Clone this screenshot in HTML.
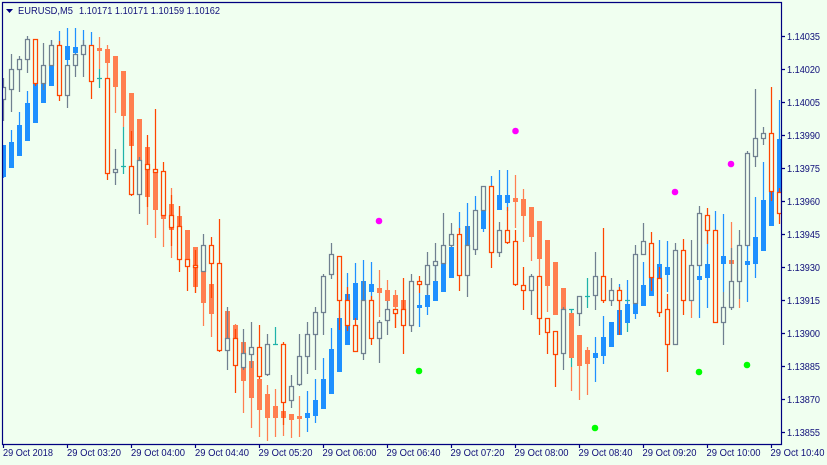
<!DOCTYPE html>
<html><head><meta charset="utf-8"><style>
html,body{margin:0;padding:0;background:#f0fff0}
svg{display:block}
text{font-family:"Liberation Sans",sans-serif;font-size:10px;fill:#10107a}
</style></head><body>
<svg width="827" height="465" viewBox="0 0 827 465" xmlns="http://www.w3.org/2000/svg">
<rect width="827" height="465" fill="#f0fff0"/>
<defs><clipPath id="c"><rect x="3" y="3" width="778" height="441"/></clipPath></defs>
<g clip-path="url(#c)" fill="none" stroke-width="1.25">
<path stroke="#1e90ff" d="M3.5 145V178M11.5 130V168M19.5 112V156M27.5 91V141M35.5 83V123M51.5 40V65M59.5 31V45M67.5 28V65M75.5 28V54M83.5 30V45M91.5 32V45M307.5 391V432M315.5 379V423M323.5 358V409M331.5 328V394M339.5 310V372M347.5 273V345M355.5 263V320M363.5 260V300M371.5 262V300M419.5 293V327M427.5 284V315M435.5 266V301M459.5 212V233M467.5 203V226M475.5 196V210M483.5 210V232M491.5 176V186M499.5 170V210M507.5 170V211M595.5 337V382M603.5 316V364M619.5 284V335M627.5 280V323M635.5 303V319M643.5 262V306M659.5 240V279M667.5 241V292M699.5 265V318M707.5 230V308M715.5 211V230M723.5 214V292M747.5 245V302M755.5 197V278M763.5 162V251M779.5 100V192"/>
<path stroke="#1e90ff" stroke-width="5" shape-rendering="crispEdges" d="M3.5 145V177M11.5 142V168M19.5 125V156M27.5 103V141M35.5 83V123M43.5 83V103M51.5 65V86M67.5 46V60M75.5 47V53M307.5 413V418M315.5 400V416M323.5 379V409M331.5 349V394M339.5 318V372M347.5 294V345M355.5 283V320M363.5 281V300M371.5 284V292M419.5 305V308M427.5 295V307M435.5 281V301M443.5 263V292M451.5 247V278M467.5 226V245M483.5 210V229M499.5 195V210M507.5 195V203M595.5 353V358M603.5 337V356M611.5 322V347M619.5 310V335M627.5 304V323M635.5 303V314M643.5 285V306M651.5 277V296M659.5 264V279M667.5 267V275M699.5 276V280M707.5 264V278M723.5 256V264M747.5 261V265M755.5 237V264M763.5 200V251M771.5 191V226M779.5 139V192"/>
<path stroke="#ff7f50" d="M99.5 37V69M107.5 45V78M115.5 56V113M123.5 71V127M147.5 147V225M155.5 169V238M163.5 215V247M171.5 188V258M179.5 206V226M195.5 247V293M203.5 271V326M211.5 284V337M227.5 311V350M235.5 324V338M243.5 342V413M251.5 361V428M259.5 379V437M267.5 385V441M275.5 389V437M283.5 411V436M291.5 414V438M299.5 396V437M379.5 270V317M387.5 280V301M395.5 290V328M515.5 175V228M523.5 189V242M531.5 207V261M539.5 221V277M547.5 240V312M571.5 367V391M579.5 335V400M587.5 347V395M691.5 300V318M731.5 222V292M739.5 299V308"/>
<path stroke="#ff7f50" stroke-width="5" shape-rendering="crispEdges" d="M99.5 48V51M107.5 49V63M115.5 56V87M123.5 71V116M131.5 93V146M139.5 119V160M147.5 147V197M155.5 169V210M163.5 215V219M171.5 204V230M179.5 216V226M187.5 230V266M195.5 247V287M203.5 271V303M211.5 284V314M227.5 311V338M235.5 325V338M243.5 342V381M251.5 361V398M259.5 379V410M267.5 394V418M275.5 406V418M283.5 411V418M291.5 414V420M299.5 416V419M379.5 288V293M387.5 290V301M395.5 295V307M403.5 300V310M515.5 198V202M523.5 199V216M531.5 207V237M539.5 221V259M547.5 240V286M555.5 262V315M563.5 288V309M571.5 313V358M579.5 335V366M587.5 350V364M731.5 260V264"/>
<path stroke="#20b2aa" d="M99.5 69V88M97 78.5h5M123.5 127V174M121 166.5h5M275.5 327V344M273 344.5h5M571.5 309V313M571.5 358V367M569 309.5h5M587.5 278V308M585 296.5h5M627.5 323V332M625 300.5h5"/>
<path stroke="#708090" d="M3.5 78V121M11.5 54V112M19.5 56V92M27.5 36V73M43.5 43V90M51.5 40V65M67.5 65V108M75.5 54V77M83.5 40V77M115.5 149V185M139.5 157V214M203.5 234V271M227.5 307V370M243.5 329V370M251.5 322V368M267.5 334V376M291.5 375V408M299.5 334V386M307.5 322V374M315.5 307V370M323.5 274V335M331.5 243V279M363.5 281V360M379.5 320V363M387.5 301V335M411.5 274V332M427.5 252V295M435.5 243V281M443.5 213V263M451.5 223V247M467.5 226V297M475.5 210V255M483.5 186V210M499.5 222V257M531.5 274V315M563.5 307V370M579.5 296V326M595.5 252V310M611.5 278V306M635.5 245V303M643.5 223V254M675.5 243V344M691.5 240V300M699.5 206V265M723.5 292V345M731.5 248V310M739.5 230V299M747.5 151V245M755.5 89V167M763.5 127V145"/>
<path stroke="#ff4500" d="M35.5 39V86M59.5 41V101M91.5 45V99M107.5 78V180M131.5 131V196M147.5 135V207M155.5 109V173M163.5 162V215M171.5 195V246M179.5 206V272M187.5 259V291M195.5 250V293M211.5 237V298M219.5 219V352M235.5 329V393M259.5 325V379M283.5 342V425M339.5 256V330M347.5 287V331M355.5 318V351M371.5 296V345M395.5 309V328M403.5 278V354M419.5 276V293M459.5 228V291M491.5 186V268M507.5 207V244M515.5 230V286M523.5 267V310M539.5 276V335M547.5 318V354M555.5 331V387M603.5 228V303M619.5 287V335M651.5 232V291M659.5 267V317M667.5 294V372M683.5 239V315M707.5 208V244M715.5 230V322M771.5 87V201M779.5 188V224"/>
<path stroke="#708090" fill="#f0fff0" d="M1.5 87.5h4V99.5h-4zM9.5 69.5h4V89.5h-4zM17.5 59.5h4V69.5h-4zM25.5 39.5h4V59.5h-4zM41.5 65.5h4V83.5h-4zM49.5 45.5h4V65.5h-4zM65.5 65.5h4V95.5h-4zM73.5 54.5h4V65.5h-4zM81.5 45.5h4V54.5h-4zM113.5 169.5h4V172.5h-4zM137.5 160.5h4V194.5h-4zM201.5 245.5h4V271.5h-4zM225.5 338.5h4V350.5h-4zM241.5 353.5h4V367.5h-4zM249.5 347.5h4V354.5h-4zM265.5 344.5h4V374.5h-4zM289.5 386.5h4V400.5h-4zM297.5 356.5h4V384.5h-4zM305.5 334.5h4V356.5h-4zM313.5 312.5h4V334.5h-4zM321.5 276.5h4V312.5h-4zM329.5 254.5h4V274.5h-4zM361.5 300.5h4V353.5h-4zM377.5 322.5h4V338.5h-4zM385.5 309.5h4V320.5h-4zM409.5 281.5h4V325.5h-4zM425.5 265.5h4V284.5h-4zM433.5 261.5h4V265.5h-4zM441.5 245.5h4V263.5h-4zM449.5 234.5h4V245.5h-4zM465.5 245.5h4V275.5h-4zM473.5 210.5h4V249.5h-4zM481.5 186.5h4V210.5h-4zM497.5 230.5h4V252.5h-4zM529.5 276.5h4V290.5h-4zM561.5 309.5h4V353.5h-4zM577.5 296.5h4V313.5h-4zM593.5 276.5h4V295.5h-4zM609.5 290.5h4V300.5h-4zM633.5 254.5h4V303.5h-4zM641.5 241.5h4V254.5h-4zM673.5 250.5h4V344.5h-4zM689.5 265.5h4V300.5h-4zM697.5 213.5h4V265.5h-4zM721.5 307.5h4V322.5h-4zM729.5 281.5h4V307.5h-4zM737.5 245.5h4V281.5h-4zM745.5 153.5h4V245.5h-4zM753.5 138.5h4V156.5h-4zM761.5 133.5h4V138.5h-4z"/>
<path stroke="#ff4500" fill="#f0fff0" d="M33.5 39.5h4V83.5h-4zM57.5 45.5h4V95.5h-4zM89.5 45.5h4V81.5h-4zM105.5 78.5h4V173.5h-4zM129.5 166.5h4V194.5h-4zM145.5 164.5h4V169.5h-4zM153.5 169.5h4V172.5h-4zM161.5 171.5h4V215.5h-4zM169.5 215.5h4V227.5h-4zM177.5 226.5h4V259.5h-4zM185.5 259.5h4V266.5h-4zM193.5 265.5h4V267.5h-4zM209.5 245.5h4V263.5h-4zM217.5 263.5h4V350.5h-4zM233.5 338.5h4V365.5h-4zM257.5 347.5h4V376.5h-4zM281.5 344.5h4V402.5h-4zM337.5 256.5h4V300.5h-4zM345.5 300.5h4V325.5h-4zM353.5 325.5h4V351.5h-4zM369.5 300.5h4V338.5h-4zM393.5 309.5h4V313.5h-4zM401.5 309.5h4V325.5h-4zM417.5 281.5h4V284.5h-4zM457.5 234.5h4V275.5h-4zM489.5 186.5h4V252.5h-4zM505.5 230.5h4V242.5h-4zM513.5 241.5h4V284.5h-4zM521.5 285.5h4V290.5h-4zM537.5 276.5h4V318.5h-4zM545.5 318.5h4V332.5h-4zM553.5 331.5h4V354.5h-4zM601.5 276.5h4V300.5h-4zM617.5 290.5h4V300.5h-4zM649.5 243.5h4V277.5h-4zM657.5 278.5h4V312.5h-4zM665.5 309.5h4V344.5h-4zM681.5 250.5h4V300.5h-4zM705.5 215.5h4V230.5h-4zM713.5 230.5h4V322.5h-4zM769.5 133.5h4V191.5h-4zM777.5 192.5h4V213.5h-4z"/>
</g>
<g fill="#ff00ff"><circle cx="379" cy="221" r="3.3"/><circle cx="515.500" cy="131" r="3.300"/><circle cx="675" cy="192" r="3.300"/><circle cx="731" cy="164" r="3.300"/></g>
<g fill="#00ff00"><circle cx="419" cy="371" r="3.300"/><circle cx="595" cy="428" r="3.300"/><circle cx="699" cy="372" r="3.300"/><circle cx="747" cy="365" r="3.300"/></g>
<g fill="none" stroke="#000080" stroke-width="1.2">
<path d="M2.5 2.5H781.500V444.500H2.500z"/>
<path d="M782 36.500h3M782 69.500h3M782 102.500h3M782 135.500h3M782 168.500h3M782 201.500h3M782 234.500h3M782 267.500h3M782 300.500h3M782 333.500h3M782 366.500h3M782 399.500h3M782 432.500h3"/>
<path d="M3.500 445v3M67.500 445v3M131.500 445v3M195.500 445v3M259.500 445v3M323.500 445v3M387.500 445v3M451.500 445v3M515.500 445v3M579.500 445v3M643.500 445v3M707.500 445v3M771.500 445v3"/>
</g>
<path d="M6 9h7l-3.500 4z" fill="#000080"/>
<text x="18" y="14" textLength="55" lengthAdjust="spacingAndGlyphs">EURUSD,M5</text>
<text x="79" y="14" textLength="141" lengthAdjust="spacingAndGlyphs">1.10171 1.10171 1.10159 1.10162</text>
<g>
<text x="787" y="40" textLength="33" lengthAdjust="spacingAndGlyphs">1.14035</text>
<text x="787" y="73" textLength="33" lengthAdjust="spacingAndGlyphs">1.14020</text>
<text x="787" y="106" textLength="33" lengthAdjust="spacingAndGlyphs">1.14005</text>
<text x="787" y="139" textLength="33" lengthAdjust="spacingAndGlyphs">1.13990</text>
<text x="787" y="172" textLength="33" lengthAdjust="spacingAndGlyphs">1.13975</text>
<text x="787" y="205" textLength="33" lengthAdjust="spacingAndGlyphs">1.13960</text>
<text x="787" y="238" textLength="33" lengthAdjust="spacingAndGlyphs">1.13945</text>
<text x="787" y="271" textLength="33" lengthAdjust="spacingAndGlyphs">1.13930</text>
<text x="787" y="304" textLength="33" lengthAdjust="spacingAndGlyphs">1.13915</text>
<text x="787" y="337" textLength="33" lengthAdjust="spacingAndGlyphs">1.13900</text>
<text x="787" y="370" textLength="33" lengthAdjust="spacingAndGlyphs">1.13885</text>
<text x="787" y="403" textLength="33" lengthAdjust="spacingAndGlyphs">1.13870</text>
<text x="787" y="436" textLength="33" lengthAdjust="spacingAndGlyphs">1.13855</text>
</g>
<g>
<text x="3" y="456" textLength="50" lengthAdjust="spacingAndGlyphs">29 Oct 2018</text>
<text x="67" y="456" textLength="54" lengthAdjust="spacingAndGlyphs">29 Oct 03:20</text>
<text x="131" y="456" textLength="54" lengthAdjust="spacingAndGlyphs">29 Oct 04:00</text>
<text x="195" y="456" textLength="54" lengthAdjust="spacingAndGlyphs">29 Oct 04:40</text>
<text x="258.500" y="456" textLength="54" lengthAdjust="spacingAndGlyphs">29 Oct 05:20</text>
<text x="322.500" y="456" textLength="54" lengthAdjust="spacingAndGlyphs">29 Oct 06:00</text>
<text x="386.500" y="456" textLength="54" lengthAdjust="spacingAndGlyphs">29 Oct 06:40</text>
<text x="450.500" y="456" textLength="54" lengthAdjust="spacingAndGlyphs">29 Oct 07:20</text>
<text x="514.500" y="456" textLength="54" lengthAdjust="spacingAndGlyphs">29 Oct 08:00</text>
<text x="578.500" y="456" textLength="54" lengthAdjust="spacingAndGlyphs">29 Oct 08:40</text>
<text x="642.500" y="456" textLength="54" lengthAdjust="spacingAndGlyphs">29 Oct 09:20</text>
<text x="706.500" y="456" textLength="54" lengthAdjust="spacingAndGlyphs">29 Oct 10:00</text>
<text x="770.500" y="456" textLength="54" lengthAdjust="spacingAndGlyphs">29 Oct 10:40</text>
</g>
</svg>
</body></html>
